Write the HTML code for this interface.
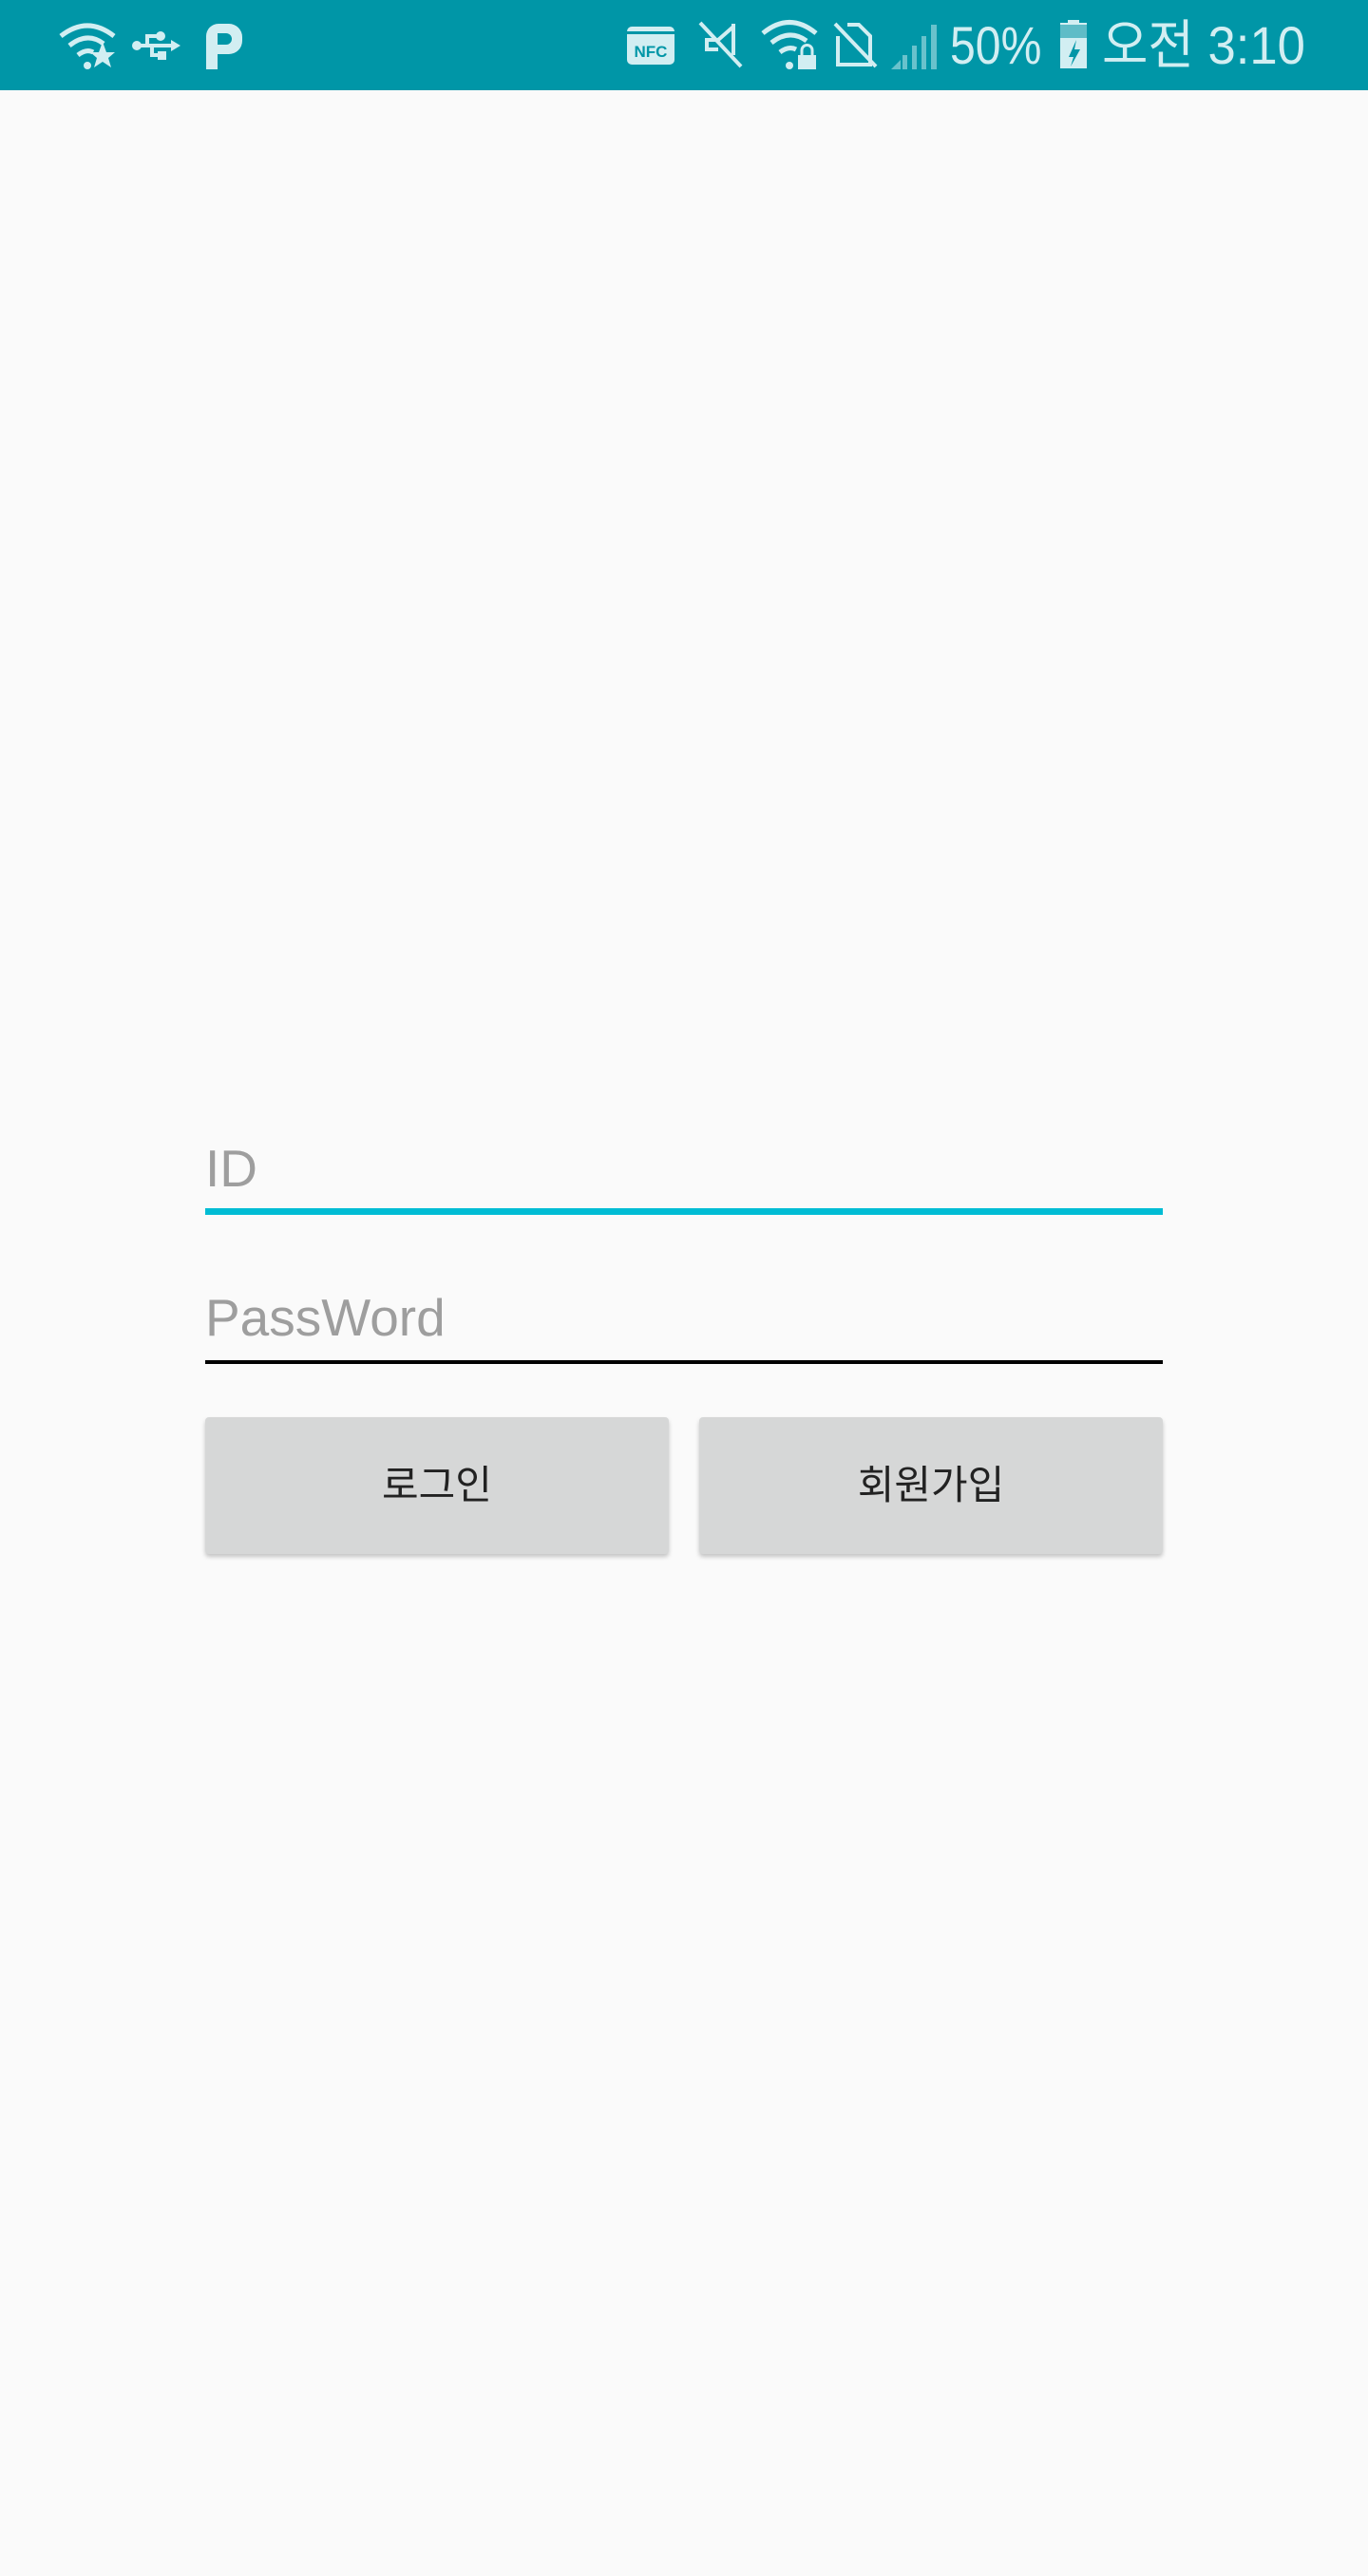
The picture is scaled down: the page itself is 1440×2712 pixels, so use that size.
<!DOCTYPE html>
<html><head><meta charset="utf-8"><style>
html,body{margin:0;padding:0}
body{width:1440px;height:2712px;background:#fafafa;position:relative;overflow:hidden;font-family:"Liberation Sans","Noto Sans CJK KR",sans-serif}
.bar{position:absolute;left:0;top:0;width:1440px;height:95px;background:#0096a7}
.st{position:absolute;top:17px;color:#d2eef2;font-size:56px;line-height:62px;transform:scaleX(.86);transform-origin:left top;white-space:nowrap}
.hint{position:absolute;left:216px;color:#9e9e9e;font-size:55px;line-height:60px}
.line{position:absolute;left:216px;width:1008px}
.btn{position:absolute;top:1492px;height:144px;width:488px;background:#d6d7d7;border-radius:4px;box-shadow:0 3px 5px rgba(0,0,0,.22);color:#222;font-size:42px;line-height:144px;text-align:center}
</style></head><body>
<div class="bar"></div>
<svg style="position:absolute;left:0;top:0" width="1440" height="95" viewBox="0 0 1440 95" fill="none" stroke="#d2eef2">
 <g stroke-width="5" stroke-linecap="butt">
  <path d="M64 38 Q92 16 120 38"/><path d="M73 48 Q92 33 109 46"/><path d="M82 58 Q91 51 98 55"/>
 </g>
 <circle cx="92" cy="69" r="4" fill="#d2eef2" stroke="none"/>
 <path fill="#d2eef2" stroke="none" d="M108 44 L112 55 L121 55 L114 61 L117 71 L108 65 L99 71 L102 61 L95 55 L104 55Z"/>
 <g stroke-width="4"><path d="M144 48 H184"/><path d="M155 48 V38 H166"/><path d="M160 48 V58 H170"/></g>
 <circle cx="144" cy="48" r="5" fill="#d2eef2" stroke="none"/><circle cx="169" cy="38" r="5" fill="#d2eef2" stroke="none"/>
 <rect x="166" y="54" width="9" height="9" fill="#d2eef2" stroke="none"/>
 <path d="M180 42 L190 48 L180 54Z" fill="#d2eef2" stroke="none"/>
 <path fill="#d2eef2" stroke="none" fill-rule="evenodd" d="M217 73 V38 A13 13 0 0 1 230 25 H241 A14 14 0 0 1 255 39 V43 A14 14 0 0 1 241 57 H229 V73Z M229 35 V47 H238 A6 6 0 0 0 238 35Z"/>
 <rect x="660" y="28" width="50" height="40" rx="5" fill="#d2eef2" stroke="none"/>
 <rect x="660" y="33" width="50" height="3" fill="#0096a7" stroke="none"/>
 <text x="685" y="60" fill="#0096a7" stroke="none" font-family="Liberation Sans" font-weight="bold" font-size="17" text-anchor="middle">NFC</text>
 <g stroke-width="4"><path d="M772 25 V58"/><path d="M772 28 L756 42 H744 V52 H756"/><path d="M737 24 L780 70"/></g>
 <g stroke-width="5"><path d="M803 35 Q831 12 859 35"/><path d="M812 45 Q831 30 849 43"/><path d="M821 55 Q830 48 838 52"/></g>
 <circle cx="831" cy="69" r="4" fill="#d2eef2" stroke="none"/>
 <rect x="840" y="58" width="19" height="15" fill="#d2eef2" stroke="none"/><path d="M844 58 V53 A5.5 5.5 0 0 1 855 53 V58" stroke-width="3"/>
 <g stroke-width="4"><path d="M882 38 V68 H916 V38 L904 26 H892"/><path d="M879 25 L922 70"/></g>
 <g fill="#d2eef2" fill-opacity=".5" stroke="none">
  <path d="M938 73 L948 63 V73Z"/><rect x="950" y="58" width="5" height="15"/><rect x="960" y="48" width="5" height="25"/><rect x="970" y="38" width="5" height="35"/><rect x="980" y="26" width="6" height="47"/>
 </g>
 <path d="M1116 24 h8 v-3 h12 v3 h8 v48 h-28Z" fill="#d2eef2" stroke="none"/>
 <rect x="1116" y="26" width="28" height="14" fill="#5fbcc7" stroke="none"/>
 <path d="M1133 42 L1125 60 H1130 L1127 70 L1137 52 H1131Z" fill="#0096a7" stroke="none"/>
</svg>
<div class="st" style="left:1000px">50%</div>
<div class="st" style="left:1160px;transform:scaleX(.94)">오전 3:10</div>

<div class="hint" style="top:1200px">ID</div>
<div class="line" style="top:1272px;height:7px;background:#00bcd4"></div>
<div class="hint" style="top:1357px">PassWord</div>
<div class="line" style="top:1432px;height:4px;background:#000"></div>

<div class="btn" style="left:216px">로그인</div>
<div class="btn" style="left:736px">회원가입</div>
</body></html>
